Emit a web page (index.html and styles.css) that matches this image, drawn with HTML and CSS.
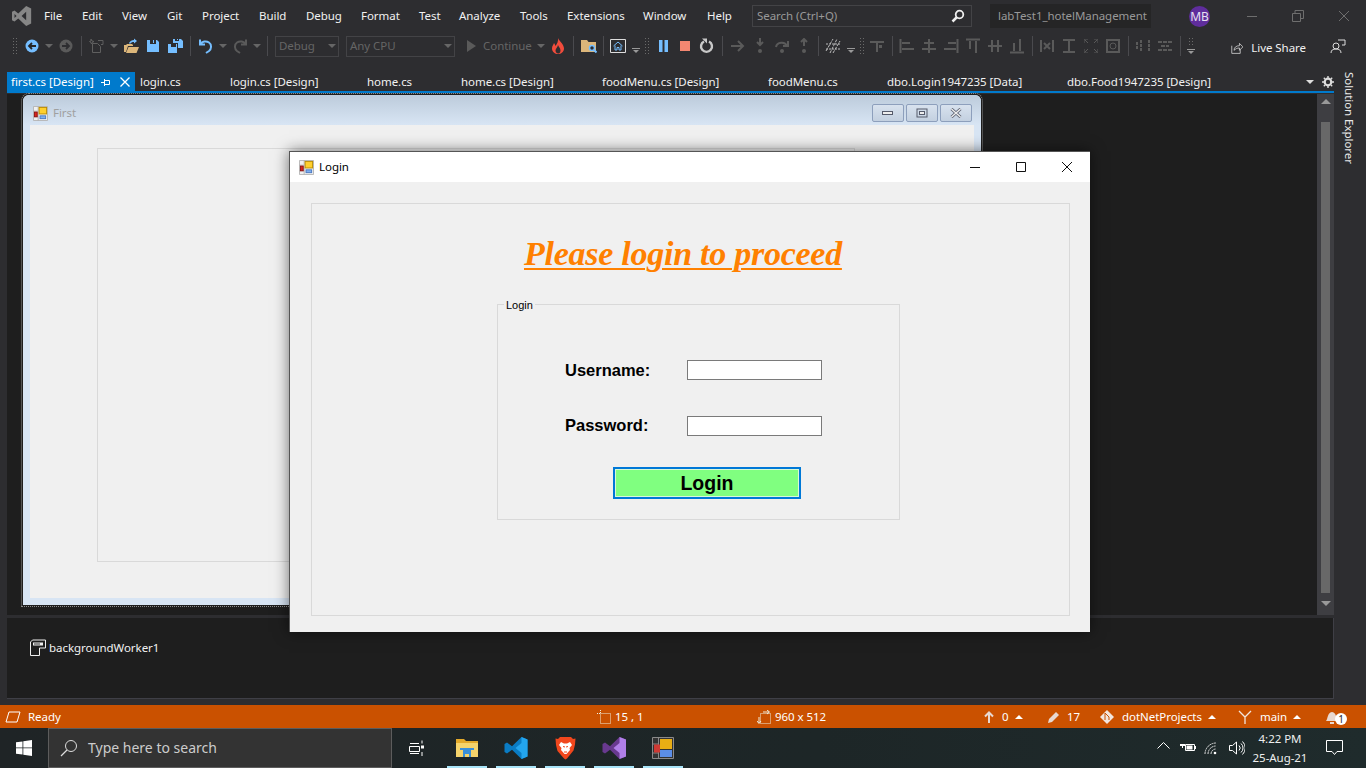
FILE: index.html
```html
<!DOCTYPE html>
<html lang="en">
<head>
  <meta charset="UTF-8" />
  <title>labTest1_hotelManagement - Microsoft Visual Studio</title>
  <link rel="stylesheet" href="styles.css">
</head>
<body>
  <svg class="defs" aria-hidden="true">
    <symbol id="form-icon" viewBox="0 0 16 16">
      <path d="M.5 .5h15v15H.5z" fill="#f0f0f0" stroke="#b4b4b4"/>
      <path d="M5.5 0v16M0 5.5h5M0 11.5h5.5" stroke="#b4b4b4"/>
      <rect x="6.5" y="1.5" width="8" height="7" fill="#ffd02e" stroke="#b98a00"/>
      <rect x="1.5" y="6.5" width="3" height="5" fill="#d8261c" stroke="#8e1010"/>
      <rect x="7.5" y="10.5" width="6" height="3" fill="#7fb0f0" stroke="#4a78c0"/>
    </symbol>
  </svg>

  <header class="titlebar">
    <svg class="vs-logo" width="22" height="20" viewBox="0 0 24 24"><path fill="#868686" fill-rule="evenodd" d="M17 0l6 3v18l-6 3-9.5-9L3 18.5 0 17V7l3-1.5L7.5 9zM17 7l-5.5 5 5.500 5zM3 9.500v5L5.500 12z"/></svg>
    <nav class="menu">
      <span>File</span><span>Edit</span><span>View</span><span>Git</span><span>Project</span><span>Build</span><span>Debug</span><span>Format</span><span>Test</span><span>Analyze</span><span>Tools</span><span>Extensions</span><span>Window</span><span>Help</span>
    </nav>
    <div class="quick-search">
      <span>Search (Ctrl+Q)</span>
      <svg width="14" height="14" viewBox="0 0 14 14"><circle cx="8.5" cy="5.5" r="3.8" fill="none" stroke="#eee" stroke-width="1.8"/><path d="M6 8l-4.500 4.500" stroke="#eee" stroke-width="2.5"/></svg>
    </div>
    <div class="solution-name">labTest1_hotelManagement</div>
    <div class="avatar">MB</div>
    <div class="win-controls">
      <svg width="12" height="12" viewBox="0 0 12 12"><path d="M1 6.5h10" stroke="#6e6e6e"/></svg>
      <svg width="12" height="12" viewBox="0 0 12 12"><path d="M.5 3.5h8v8h-8zM3 3.5v-3h8.500v8h-3" fill="none" stroke="#6e6e6e"/></svg>
      <svg width="12" height="12" viewBox="0 0 12 12"><path d="M1 1l10 10M11 1L1 11" stroke="#6e6e6e"/></svg>
    </div>
  </header>

  <div class="toolbar">
    <i class="grip grip-first"></i>
    <span class="ti"><svg width="16" height="16" viewBox="0 0 16 16"><circle cx="8" cy="8" r="6.5" fill="#75beff"/><path d="M12 8H5.5M8 5L5 8l3 3" fill="none" stroke="#252526" stroke-width="1.8"/></svg></span>
    <i class="car"></i>
    <span class="ti"><svg width="16" height="16" viewBox="0 0 16 16"><circle cx="8" cy="8" r="6.5" fill="#5a5a5a"/><path d="M4 8h6.5M8 5l3 3-3 3" fill="none" stroke="#2d2d30" stroke-width="1.8"/></svg></span>
    <i class="sep"></i>
    <span class="ti"><svg width="16" height="16" viewBox="0 0 16 16"><path d="M3.5 5.5h5l3 3v6h-8z" fill="none" stroke="#5f5f5f"/><path d="M2 1l1 2 2 .5-2 1L2.5 6 2 4.500 .5 3.500l1.500-.5zM9 2.500h5v4h-2" fill="none" stroke="#5f5f5f"/></svg></span>
    <i class="car"></i>
    <span class="ti"><svg width="16" height="16" viewBox="0 0 16 16"><path d="M1 7h2l1-1h5l1 1v1H5L3 14H1z" fill="#dcb67a"/><path d="M3 15l2.500-6H16l-2.500 6z" fill="#dcb67a"/><path d="M6 5c1-2 3-3 5-3V.5l3 2.500-3 2.500V4C9 4 8 4.500 7 6z" fill="#75beff"/></svg></span>
    <span class="ti"><svg width="14" height="14" viewBox="0 0 14 14"><path fill="#75beff" fill-rule="evenodd" d="M1 1h10l2 2v10H1zM4 1v4h6V1H8v3H7V1z"/></svg></span>
    <span class="ti"><svg width="16" height="16" viewBox="0 0 16 16"><path fill="#75beff" fill-rule="evenodd" d="M1 6h3v3h5V6h1v9H1zM6 1h8l2 2v7h-5V5H6zM8 1v2h4V1h-1v1h-1V1z"/></svg></span>
    <i class="sep"></i>
    <span class="ti"><svg width="16" height="16" viewBox="0 0 16 16"><path d="M2 1.5v5h5M2.500 6C4 3.500 8 2.500 11 4.500s2.500 6.500 0 8.500l-3 2" fill="none" stroke="#75beff" stroke-width="2"/></svg></span>
    <i class="car"></i>
    <span class="ti"><svg width="16" height="16" viewBox="0 0 16 16"><path d="M14 1.5v5H9M13.500 6C12 3.500 8 2.500 5 4.500s-2.500 6.500 0 8.500l3 2" fill="none" stroke="#5a5a5a" stroke-width="2"/></svg></span>
    <i class="car"></i>
    <i class="sep"></i>
    <div class="combo combo-debug"><span>Debug</span><i class="car"></i></div>
    <div class="combo combo-cpu"><span>Any CPU</span><i class="car"></i></div>
    <span class="ti ti-play"><svg width="12" height="14" viewBox="0 0 12 14"><path d="M2 1l9 6-9 6z" fill="#5a5a5a"/></svg></span>
    <span class="continue">Continue</span>
    <i class="car"></i>
    <span class="ti"><svg width="14" height="16" viewBox="0 0 14 16"><path d="M7 0c1 3 6 6 6 10.5C13 14 10 16 7 16s-6-2-6-5.500C1 8 2.500 6.500 3 5c.8 1 1.200 2 1.500 3C6 6 7.500 3 7 0z" fill="#f14c3c"/><path d="M7 7c.5 2 2.500 3 2.500 5.500S8 15.500 7 15.500s-2.500-1-2.500-3C4.500 10.500 6.500 9.500 7 7z" fill="#2d2d30"/></svg></span>
    <i class="sep"></i>
    <span class="ti"><svg width="16" height="16" viewBox="0 0 16 16"><path d="M0 2h6l1.5 2H15v10H0z" fill="#dcb67a"/><circle cx="11" cy="10" r="2.5" fill="#2d2d30" stroke="#75beff" stroke-width="1.5"/><path d="M13 12l2.500 2.500" stroke="#75beff" stroke-width="2"/></svg></span>
    <i class="sep sep-7"></i>
    <span class="ti"><svg width="16" height="14" viewBox="0 0 16 14"><path d="M.5 .5h15v13H.5z" fill="none" stroke="#ddd"/><path d="M3.5 7L8 3l4.500 4M5 6.500V11h2V8.500h2V11h2V6.500" fill="none" stroke="#75beff"/></svg></span>
    <i class="drop"></i>
    <i class="grip"></i>
    <span class="ti ti-pause"><svg width="9" height="12" viewBox="0 0 9 12"><path d="M0 0h3.500v12H0zM5.500 0H9v12H5.500z" fill="#75beff"/></svg></span>
    <span class="ti"><svg width="10" height="10" viewBox="0 0 10 10"><path d="M0 0h10v10H0z" fill="#f48771"/></svg></span>
    <span class="ti"><svg width="16" height="16" viewBox="0 0 16 16"><path d="M5 3.5a5.500 5.500 0 1 0 5 0" fill="none" stroke="#c8c8c8" stroke-width="2.400"/><path d="M3 .5h5v5z" fill="#c8c8c8"/></svg></span>
    <i class="sep"></i>
    <span class="ti"><svg width="16" height="14" viewBox="0 0 16 14"><path d="M1 7h12M8 2l5 5-5 5" fill="none" stroke="#5a5a5a" stroke-width="2"/></svg></span>
    <span class="ti"><svg width="14" height="16" viewBox="0 0 14 16"><path d="M7 0v6M4 4l3 3 3-3" fill="none" stroke="#5a5a5a" stroke-width="2"/><circle cx="7" cy="13" r="2" fill="#5a5a5a"/></svg></span>
    <span class="ti"><svg width="16" height="16" viewBox="0 0 16 16"><path d="M2 9c1-5 9-6 11-1M14 3v5H9" fill="none" stroke="#5a5a5a" stroke-width="2"/><circle cx="8" cy="13" r="2" fill="#5a5a5a"/></svg></span>
    <span class="ti"><svg width="14" height="16" viewBox="0 0 14 16"><path d="M7 8V2M4 4l3-3 3 3" fill="none" stroke="#5a5a5a" stroke-width="2"/><circle cx="7" cy="13" r="2" fill="#5a5a5a"/></svg></span>
    <i class="sep sep-7"></i>
    <span class="ti"><svg width="16" height="16" viewBox="0 0 16 16"><path d="M1 6h14M1 11h14" stroke="#bbb" stroke-dasharray="2 1"/><path d="M5 15L12 1M8 15l7-12M1 13L8 1" stroke="#bbb" stroke-dasharray="3 1" fill="none"/></svg></span>
    <i class="drop"></i>
    <i class="grip"></i>
    <span class="ti ti-align"><svg width="16" height="16" viewBox="0 0 16 16"><path d="M1 3h14v2H1zM7 5h2v9H7zM10 7h3v3h-3z" fill="#5a5a5a"/></svg></span>
    <i class="sep sep-8"></i>
    <span class="ti"><svg width="16" height="14" viewBox="0 0 16 14"><path d="M1.500 0v14M3 4h8M3 10h12" stroke="#5a5a5a" stroke-width="2" fill="none"/></svg></span>
    <span class="ti"><svg width="16" height="14" viewBox="0 0 16 14"><path d="M8 0v14M3 4h10M1 10h14" stroke="#5a5a5a" stroke-width="2" fill="none"/></svg></span>
    <span class="ti"><svg width="16" height="14" viewBox="0 0 16 14"><path d="M14.500 0v14M5 4h8M1 10h12" stroke="#5a5a5a" stroke-width="2" fill="none"/></svg></span>
    <span class="ti"><svg width="14" height="16" viewBox="0 0 14 16"><path d="M0 1.500h14M4 3v8M10 3v12" stroke="#5a5a5a" stroke-width="2" fill="none"/></svg></span>
    <span class="ti"><svg width="14" height="14" viewBox="0 0 14 14"><path d="M0 7h14M4 1v12M10 1v12" stroke="#5a5a5a" stroke-width="2" fill="none"/></svg></span>
    <span class="ti"><svg width="14" height="16" viewBox="0 0 14 16"><path d="M0 14.500h14M4 5v8M10 1v12" stroke="#5a5a5a" stroke-width="2" fill="none"/></svg></span>
    <i class="sep sep-8"></i>
    <span class="ti"><svg width="14" height="14" viewBox="0 0 14 14"><path d="M1 1v12M13 1v12M4 4l6 6M10 4l-6 6" stroke="#5a5a5a" stroke-width="2" fill="none"/></svg></span>
    <span class="ti"><svg width="14" height="14" viewBox="0 0 14 14"><path d="M1 1h12M1 13h12M7 2v10" stroke="#5a5a5a" stroke-width="2" fill="none"/></svg></span>
    <span class="ti"><svg width="14" height="14" viewBox="0 0 14 14"><path d="M0 4V0h4M10 0h4v4M14 10v4h-4M4 14H0v-4M1 1l3 3M13 1l-3 3M1 13l3-3M13 13l-3-3" stroke="#5a5a5a" fill="none"/></svg></span>
    <span class="ti"><svg width="14" height="14" viewBox="0 0 14 14"><path d="M1 1h12v12H1z" fill="none" stroke="#5a5a5a" stroke-width="2"/><circle cx="7" cy="7" r="3" fill="none" stroke="#5a5a5a"/></svg></span>
    <i class="sep sep-8"></i>
    <span class="ti"><svg width="14" height="14" viewBox="0 0 14 14"><path d="M1 3v8M5 1v12M13 1v12" stroke="#5a5a5a" stroke-width="2" stroke-dasharray="3 1" fill="none"/></svg></span>
    <span class="ti"><svg width="14" height="14" viewBox="0 0 14 14"><path d="M0 3h14M3 7h8M0 11h14" stroke="#5a5a5a" stroke-width="2" stroke-dasharray="4 1" fill="none"/></svg></span>
    <i class="sep sep-8"></i>
    <div class="grip-drop"><i class="grip grip-short"></i><i class="drop drop-solo"></i></div>
    <div class="live-share">
      <svg width="16" height="16" viewBox="0 0 16 16"><path d="M1 5v10h11v-5" fill="none" stroke="#ddd"/><path d="M4 11c0-4 3-6 7-6V2l4.500 4.500L11 11V8c-3 0-5 1-7 3z" fill="none" stroke="#ddd"/></svg>
      <span>Live Share</span>
    </div>
    <span class="ti ti-feedback"><svg width="16" height="16" viewBox="0 0 16 16"><circle cx="6" cy="8" r="3" fill="none" stroke="#ddd"/><path d="M1 15c0-3 2-4 5-4s5 1 5 4M8 2h7v5h-3" fill="none" stroke="#ddd"/></svg></span>
  </div>

  <div class="ide-body">
    <div class="doc">
      <div class="tabs">
        <div class="tab-active">
          <span>first.cs [Design]</span>
          <svg width="10" height="10" viewBox="0 0 10 10"><path d="M0 5.500h3M3.500 2v7M3.500 3.500h5v4h-5" fill="none" stroke="#fff"/></svg>
          <svg width="10" height="10" viewBox="0 0 10 10"><path d="M.5 .5l9 9M9.500 .5l-9 9" stroke="#fff" stroke-width="1.300"/></svg>
        </div>
        <span>login.cs</span><span>login.cs [Design]</span><span>home.cs</span><span>home.cs [Design]</span><span>foodMenu.cs [Design]</span><span>foodMenu.cs</span><span>dbo.Login1947235 [Data]</span><span>dbo.Food1947235 [Design]</span>
        <i class="tabs-caret"></i>
        <svg class="tabs-gear" width="12" height="12" viewBox="0 0 12 12"><circle cx="6" cy="6" r="3.300" fill="none" stroke="#ddd" stroke-width="2.200"/><path d="M6 0v12M0 6h12M1.800 1.800l8.400 8.400M10.200 1.800l-8.400 8.400" stroke="#ddd" stroke-width="1.400" stroke-dasharray="2 8"/></svg>
      </div>

      <div class="canvas-row">
        <div class="designer">
          <div class="first-form">
            <div class="first-title">
              <svg width="15" height="15"><use href="#form-icon"/></svg>
              <span class="first-name">First</span>
              <div class="aero-buttons">
                <span><svg width="12" height="8" viewBox="0 0 12 8"><rect x=".5" y="2.500" width="10" height="3" fill="#eee" stroke="#555a6a"/></svg></span>
                <span><svg width="12" height="10" viewBox="0 0 12 10"><rect x="1" y="1" width="10" height="8" fill="none" stroke="#555a6a"/><rect x="3.500" y="3.500" width="5" height="3" fill="#eee" stroke="#555a6a"/></svg></span>
                <span><svg width="12" height="10" viewBox="0 0 12 10"><path d="M1.500 1l9 8M10.500 1l-9 8" stroke="#555a6a" stroke-width="3"/><path d="M1.500 1l9 8M10.500 1l-9 8" stroke="#eee" stroke-width="1.500"/></svg></span>
              </div>
            </div>
            <div class="first-client">
              <div class="first-panel"></div>
            </div>
          </div>

          <div class="login-window">
            <div class="login-title">
              <svg width="15" height="15"><use href="#form-icon"/></svg>
              <span class="login-name">Login</span>
              <div class="login-controls">
                <svg width="12" height="12" viewBox="0 0 12 12"><path d="M1 6.500h10" stroke="#111"/></svg>
                <svg width="12" height="12" viewBox="0 0 12 12"><path d="M1.500 1.500h9v9h-9z" fill="none" stroke="#111"/></svg>
                <svg width="12" height="12" viewBox="0 0 12 12"><path d="M1 1l10 10M11 1L1 11" stroke="#111"/></svg>
              </div>
            </div>
            <div class="login-client">
              <div class="login-panel">
                <h1 class="login-heading">Please login to proceed</h1>
                <form class="login-group">
                  <span class="group-caption">Login</span>
                  <div class="field">
                    <label for="username">Username:</label>
                    <input type="text" id="username" />
                  </div>
                  <div class="field field-password">
                    <label for="password">Password:</label>
                    <input type="password" id="password" />
                  </div>
                  <button type="button" class="login-button">Login</button>
                </form>
              </div>
            </div>
          </div>
        </div>

        <div class="scrollbar">
          <i class="arrow-up"></i>
          <div class="thumb"></div>
          <i class="arrow-down"></i>
        </div>
      </div>

      <div class="splitter"></div>
      <div class="tray">
        <svg width="18" height="18" viewBox="0 0 18 18"><path d="M1.500 16.500V3l2-2h13v8h-6v7.500z" fill="none" stroke="#eee"/><path d="M4 3.500h10v3H4z" fill="#eee"/><path d="M5 4.500h6v1H5z" fill="#333"/></svg>
        <span>backgroundWorker1</span>
      </div>
    </div>
    <aside class="side">
      <span class="side-tab">Solution Explorer</span>
    </aside>
  </div>

  <footer class="statusbar">
    <div class="st">
      <svg width="16" height="12" viewBox="0 0 16 12"><path d="M4 1h11l-3 10H1z" fill="none" stroke="#fff"/></svg>
      <span class="ready">Ready</span>
    </div>
    <div class="st">
      <svg width="14" height="14" viewBox="0 0 14 14"><path d="M3.500 0v3M0 3.500h3M3.500 3.500h10v10h-10z" fill="none" stroke="#eed" stroke-dasharray="1 1"/></svg>
      <span>15 , 1</span>
    </div>
    <div class="st">
      <svg width="14" height="14" viewBox="0 0 14 14"><path d="M3.500 3.500h10v10h-10z" fill="none" stroke="#eed" stroke-dasharray="1 1"/><path d="M6 2h6M10 0l2.500 2L10 4M2 7v6M0 11l2 2.500L4 11" fill="none" stroke="#eed"/></svg>
      <span>960 x 512</span>
    </div>
    <div class="st">
      <svg width="10" height="12" viewBox="0 0 10 12"><path d="M5 12V2M1 5.500l4-4 4 4" fill="none" stroke="#e8d8d0" stroke-width="2"/></svg>
      <span class="st-gap">0</span><i class="up"></i>
    </div>
    <div class="st">
      <svg width="14" height="14" viewBox="0 0 14 14"><path d="M1 13l1-4 7-7 3 3-7 7z" fill="#e8d8d0"/></svg>
      <span class="st-gap-small">17</span>
    </div>
    <div class="st">
      <svg width="14" height="14" viewBox="0 0 14 14"><path d="M7 0l7 7-7 7-7-7z" fill="#f2e6de"/><path d="M5 3l4 4v3M5 3v7" stroke="#ca5100" fill="none"/></svg>
      <span class="st-gap">dotNetProjects</span><i class="up"></i>
    </div>
    <div class="st">
      <svg width="14" height="14" viewBox="0 0 14 14"><path d="M1 1l6 6 6-6M7 7v7" fill="none" stroke="#f2e6de" stroke-width="1.300"/></svg>
      <span class="st-gap">main</span><i class="up"></i>
    </div>
    <div class="st st-bell">
      <svg width="14" height="14" viewBox="0 0 14 14"><path d="M1 11c2-2 1-8 6-9 5 1 4 7 6 9z" fill="#e8d8d0"/><path d="M5 12h4v2H5z" fill="#e8d8d0"/></svg>
      <span class="badge">1</span>
    </div>
  </footer>

  <div class="taskbar">
    <div class="start">
      <svg width="16" height="16" viewBox="0 0 16 16"><path d="M0 2.300l6.500-.9v6.100H0zM7.300 1.300L16 0v7.500H7.300zM0 8.300h6.500v6.300L0 13.700zM7.300 8.300H16V16l-8.700-1.300z" fill="#fff"/></svg>
    </div>
    <div class="task-search">
      <svg width="18" height="18" viewBox="0 0 18 18"><circle cx="11" cy="7" r="5.500" fill="none" stroke="#ddd"/><path d="M7 11l-6 6" stroke="#ddd" stroke-width="1.300"/></svg>
      <span>Type here to search</span>
    </div>
    <div class="task-view">
      <svg width="16" height="16" viewBox="0 0 16 16"><path d="M2 3.500h9M2 13.500h9M1.500 6.500h10v5h-10zM14 .5v3M14 12v4" fill="none" stroke="#fff"/><path d="M13 5.500h3v3h-3z" fill="#fff"/></svg>
    </div>
    <div class="app">
      <svg width="24" height="20" viewBox="0 0 24 20"><path d="M1 1h8l2 2h12v3H1z" fill="#e3a92a"/><path d="M1 5h22v14H1z" fill="#f5d36b"/><path d="M8 12h8v7h-2v-3h-4v3H8z" fill="#3a8fd8"/><path d="M5 12h14v-2H5z" fill="#3a8fd8"/></svg>
    </div>
    <div class="app">
      <svg width="24" height="24" viewBox="0 0 24 24"><path d="M17.500 1l6 2.500v17l-6 2.500L8 13.800 3 17.500.5 16V8L3 6.500l5 3.700z" fill="#0a7cc4"/><path d="M17.500 1l6 2.500v17l-6 2.500v-6l-6-5 6-5z" fill="#23a5ee"/></svg>
    </div>
    <div class="app">
      <svg width="21" height="24" viewBox="0 0 21 24"><path d="M5 1h11l2 2 2.500-.5-.5 6-1.500 6L12 22.500l-1.500 1-1.500-1L2.500 15 1 9 .5 2.500 3 3z" fill="#f1471d"/><path d="M6 6l3 1.500h3L15 6l2 3-2.500 3 .5 2-3.500 4h-2L6 14l.5-2L4 9z" fill="#fff"/><path d="M8 10.500l2 .5M13 10.500l-2 .5M9 16h3" stroke="#f1471d"/></svg>
    </div>
    <div class="app">
      <svg width="24" height="24" viewBox="0 0 24 24"><path d="M17.500 1L24 3.500v17L17.500 23 8 13.800 3 17.500.5 16V8L3 6.500l5 3.700z" fill="#68398f"/><path d="M17.500 1L24 3.500v17L17.500 23v-6l-6-5 6-5z" fill="#b07fe8"/></svg>
    </div>
    <div class="app">
      <svg width="22" height="22" viewBox="0 0 22 22"><path d="M.5 .5h21v21H.5z" fill="#333" stroke="#8a8a8a"/><path d="M6.500 1v20M1 7h6M1 16h6" stroke="#8a8a8a"/><rect x="8" y="2" width="12" height="10" fill="#e8ae14"/><rect x="2" y="7.500" width="6" height="8" fill="#cf3a34"/><rect x="8" y="13" width="12" height="7" fill="#5b8ee8"/></svg>
    </div>
    <div class="tray-icons">
      <span><svg width="13" height="8" viewBox="0 0 13 8"><path d="M.5 7.500l6-6 6 6" fill="none" stroke="#fff"/></svg></span>
      <span><svg width="16" height="12" viewBox="0 0 16 12"><path d="M5.500 3.500h9v6h-9z" fill="none" stroke="#fff"/><path d="M6.500 4.500h6v4h-6zM15 5h1v3h-1zM1 0v3M4 0v3M0 3h5v2H3v2H2V5H0z" fill="#fff"/></svg></span>
      <span><svg width="16" height="14" viewBox="0 0 16 14"><path d="M1 13A11 11 0 0 1 12 2M4 13a8 8 0 0 1 8-8M7 13a5 5 0 0 1 5-5" fill="none" stroke="#ddd" stroke-dasharray="2 .5"/><circle cx="11" cy="12" r="1.300" fill="#fff"/></svg></span>
      <span><svg width="16" height="14" viewBox="0 0 16 14"><path d="M.5 4.500h3l4-3.500v12l-4-3.500h-3z" fill="none" stroke="#fff"/><path d="M10 4.500a3.500 3.500 0 0 1 0 5M12 2.500a6 6 0 0 1 0 9M13.500 .5a9 9 0 0 1 0 13" fill="none" stroke="#fff"/></svg></span>
    </div>
    <div class="clock">
      <span>4:22 PM</span>
      <span>25-Aug-21</span>
    </div>
    <div class="notify">
      <svg width="17" height="16" viewBox="0 0 17 16"><path d="M.5 .5h16v11h-5.500l-2.500 3-2.500-3H.5z" fill="none" stroke="#fff"/></svg>
    </div>
  </div>
</body>
</html>
```

FILE: styles.css
```css
:root {
  --ide-bg: #2d2d30;
  --editor-bg: #1e1e1e;
  --accent: #007acc;
  --status: #ca5100;
  --dim: #656565;
  --ui-font: "Noto Sans", "Open Sans", sans-serif;
}
* {
  box-sizing: border-box;
}
html, body {
  margin: 0;
  height: 768px;
  overflow: hidden;
}
body {
  background: var(--ide-bg);
  color: #f1f1f1;
  font: 11.5px/16px var(--ui-font);
  letter-spacing: -0.05px;
}
i {
  font-style: normal;
}
.defs {
  display: block;
  width: 0;
  height: 0;
}

/* title bar */
.titlebar {
  display: flex;
  align-items: center;
  height: 32px;
}
.vs-logo {
  margin-left: 11px;
}
.menu {
  display: grid;
  grid-template-columns: 38px 40px 45px 35px 57px 47px 55px 58px 40px 61px 47px 76px 64px 45px;
  margin-left: 11px;
}
.quick-search {
  display: flex;
  align-items: center;
  justify-content: space-between;
  width: 220px;
  height: 22px;
  margin-top: -1px;
  padding: 0 6px 0 4px;
  border: 1px solid #434346;
  color: #999;
}
.solution-name {
  width: 161px;
  margin-left: 18px;
  padding: 4px 8px;
  background: #252526;
  color: #999;
  white-space: nowrap;
}
.avatar {
  width: 21px;
  height: 21px;
  margin-left: 38px;
  border-radius: 50%;
  background: #5f2d9c;
  color: #e8e0f0;
  font-size: 12px;
  line-height: 21px;
  text-align: center;
}
.win-controls {
  display: flex;
  gap: 34px;
  margin-left: 36px;
}

/* toolbar */
.toolbar {
  display: flex;
  align-items: center;
  height: 28px;
  padding-left: 12px;
}
.grip {
  flex: none;
  width: 6px;
  height: 18px;
  background: radial-gradient(#6a6a6a 1px, transparent 1px) 0 0 / 3px 3px;
}
.grip-first {
  margin-right: 3px;
}
.grip-drop {
  display: flex;
  flex: none;
  flex-direction: column;
  align-items: center;
  gap: 4px;
  margin-left: 2px;
  width: 10px;
}
.grip-short {
  height: 8px;
}
.ti {
  display: flex;
  flex: none;
  align-items: center;
  justify-content: center;
  width: 22px;
}
.ti-play {
  margin-left: 5px;
}
.ti-pause {
  margin-left: 2px;
}
.ti-align {
  margin-left: 1px;
}
.car {
  display: flex;
  flex: none;
  justify-content: center;
  width: 12px;
}
.car::after {
  content: "";
  border-top: 4px solid #666;
  border-left: 4px solid transparent;
  border-right: 4px solid transparent;
}
.sep {
  flex: none;
  width: 9px;
  height: 20px;
  background: linear-gradient(#4a4a4e, #4a4a4e) center / 1px 100% no-repeat;
}
.sep-7 {
  width: 7px;
}
.sep-8 {
  width: 8px;
}
.drop {
  position: relative;
  flex: none;
  width: 8px;
  height: 6px;
  margin: 10px 4px 0 3px;
  border-top: 1px solid #999;
}
.drop::after {
  content: "";
  position: absolute;
  top: 1px;
  left: 1px;
  border-top: 3px solid #999;
  border-left: 3px solid transparent;
  border-right: 3px solid transparent;
}
.drop-solo {
  margin: 0;
}
.combo {
  display: flex;
  flex: none;
  align-items: center;
  justify-content: space-between;
  height: 21px;
  padding-left: 3px;
  border: 1px solid #434346;
  color: var(--dim);
}
.combo-debug {
  width: 64px;
  margin-left: 3px;
  margin-right: 7px;
}
.combo-cpu {
  width: 109px;
}
.continue {
  flex: none;
  width: 52px;
  margin-left: 1px;
  color: var(--dim);
}
.live-share {
  display: flex;
  flex: none;
  align-items: center;
  gap: 8px;
  width: 75px;
  margin-left: 35px;
  margin-top: 3px;
  white-space: nowrap;
}
.ti-feedback {
  margin-left: 21px;
}

/* documents and designer */
.ide-body {
  display: flex;
  height: 633px;
  margin-top: 12px;
}
.doc {
  display: flex;
  flex: none;
  flex-direction: column;
  width: 1327px;
  margin-left: 7px;
}
.tabs {
  display: grid;
  grid-template-columns: 133px 90px 137px 94px 141px 166px 119px 180px 234px 18px 15px;
  align-items: center;
  height: 21px;
  border-bottom: 2px solid var(--accent);
}
.tab-active {
  display: flex;
  align-items: center;
  height: 19px;
  margin-right: 5px;
  padding-left: 4px;
  background: var(--accent);
  color: #fff;
}
.tab-active span {
  width: 90px;
  white-space: nowrap;
}
.tab-active svg + svg {
  margin-left: 9px;
}
.tabs-caret {
  justify-self: center;
  border-top: 4px solid #ddd;
  border-left: 4px solid transparent;
  border-right: 4px solid transparent;
}
.tabs-gear {
  justify-self: end;
}
.canvas-row {
  display: flex;
  height: 521px;
  margin-top: 1px;
  background: var(--editor-bg);
}
.designer {
  position: relative;
  z-index: 1;
  flex: 1;
}
.scrollbar {
  display: flex;
  flex-direction: column;
  align-items: center;
  width: 17px;
  padding: 5px 0;
  background: #3e3e42;
}
.arrow-up {
  border-bottom: 5px solid #999;
  border-left: 5px solid transparent;
  border-right: 5px solid transparent;
}
.arrow-down {
  border-top: 5px solid #999;
  border-left: 5px solid transparent;
  border-right: 5px solid transparent;
}
.thumb {
  width: 9px;
  height: 471px;
  margin: 18px 0 8px;
  background: #686868;
}
.splitter {
  height: 3px;
  background: var(--ide-bg);
}
.tray {
  display: flex;
  align-items: center;
  gap: 2px;
  height: 81px;
  padding: 0 0 20px 22px;
  background: var(--editor-bg);
  border-right: 1px solid #3f3f46;
  border-bottom: 1px solid #3f3f46;
  color: #f1f1f1;
}
.side {
  flex: 1;
}
.side-tab {
  display: block;
  margin-left: 7px;
  writing-mode: vertical-rl;
  color: #e8e8e8;
  white-space: nowrap;
}

/* the two forms on the canvas */
.first-form {
  position: absolute;
  left: 16px;
  top: 1px;
  display: flex;
  flex-direction: column;
  width: 958px;
  height: 510px;
  background: #d8e5f4;
  border-radius: 6px 6px 0 0;
  outline: 1px dotted #8a8a8a;
  outline-offset: 1px;
}
.first-title {
  display: flex;
  flex: none;
  align-items: center;
  height: 30px;
  padding: 6px 9px 0 10px;
  border-radius: 6px 6px 0 0;
  background: linear-gradient(#bccbdb, #d8e5f4);
}
.first-name {
  margin-left: 5px;
  color: #a0a0a0;
}
.aero-buttons {
  display: flex;
  gap: 2px;
  margin-left: auto;
}
.aero-buttons span {
  display: flex;
  align-items: center;
  justify-content: center;
  width: 32px;
  height: 18px;
  border: 1px solid #8d9fbc;
  border-radius: 2px;
  background: linear-gradient(#d8e2ee, #c3d0e0);
}
.first-client {
  flex: 1;
  margin: 0 7px 7px;
  padding: 23px 0 36px 67px;
  background: #f0f0f0;
}
.first-panel {
  width: 758px;
  height: 100%;
  border: 1px solid #d9d9d9;
}
.login-window {
  position: absolute;
  left: 282px;
  top: 57px;
  width: 801px;
  height: 481px;
  border: 1px solid #555;
  border-width: 1px 0 0 1px;
  background: #f0f0f0;
  box-shadow: 0 0 14px rgba(0, 0, 0, 0.55);
}
.login-title {
  display: flex;
  align-items: center;
  height: 30px;
  padding: 0 17px 0 9px;
  background: #fff;
  color: #000;
}
.login-name {
  margin-left: 5px;
}
.login-controls {
  display: flex;
  gap: 34px;
  margin-left: auto;
}
.login-client {
  padding: 21px 21px 16px;
}
.login-panel {
  width: 759px;
  height: 413px;
  border: 1px solid #d9d9d9;
}
.login-heading {
  height: 100px;
  margin: 0;
  padding: 29px 0 0 212px;
  color: #ff8000;
  font: italic bold 34px/42px "Liberation Serif", serif;
  letter-spacing: -0.26px;
  text-decoration: underline 2px;
  text-underline-offset: 3px;
}
.login-group {
  position: relative;
  width: 403px;
  height: 216px;
  margin-left: 185px;
  padding: 55px 0 0 67px;
  border: 1px solid #d9d9d9;
  color: #000;
  font-family: "Liberation Sans", sans-serif;
  letter-spacing: 0;
}
.group-caption {
  position: absolute;
  left: 6px;
  top: -7px;
  padding: 0 2px;
  background: #f0f0f0;
  font-size: 11px;
  line-height: 14px;
}
.field {
  display: flex;
  align-items: center;
  height: 20px;
  margin-bottom: 36px;
}
.field label {
  width: 122px;
  font-size: 16.5px;
  font-weight: bold;
  line-height: 20px;
}
.field-password {
  margin-bottom: 31px;
}
.field-password label {
  margin-bottom: 3px;
}
.field input {
  width: 135px;
  height: 20px;
  padding: 0 2px;
  border: 1px solid #7a7a7a;
  border-radius: 0;
  background: #fff;
  outline: none;
}
.login-button {
  display: block;
  width: 188px;
  height: 32px;
  margin-left: 48px;
  padding: 0;
  border: 2px solid #0078d7;
  border-radius: 0;
  background: #80ff80;
  box-shadow: inset 0 0 0 1px #d8f8d8;
  color: #000;
  font: bold 19.5px/26px "Liberation Sans", sans-serif;
}

/* status bar */
.statusbar {
  display: grid;
  grid-template-columns: 592px 160px 227px 63px 53px 138px 87px 1fr;
  height: 23px;
  padding-left: 5px;
  background: var(--status);
  color: #fff;
}
.st {
  display: flex;
  align-items: center;
  gap: 4px;
  white-space: nowrap;
}
.ready {
  margin-left: 3px;
}
.st-gap {
  margin-left: 4px;
}
.st-gap-small {
  margin-left: 2px;
}
.up {
  margin-left: 2px;
  border-bottom: 4px solid #fff;
  border-left: 4px solid transparent;
  border-right: 4px solid transparent;
}
.st-bell {
  position: relative;
}
.badge {
  position: absolute;
  left: 10px;
  top: 8px;
  width: 12px;
  height: 12px;
  border-radius: 50%;
  background: #fff;
  color: #1e1e1e;
  font-size: 10px;
  line-height: 12px;
  text-align: center;
}

/* taskbar */
.taskbar {
  display: flex;
  align-items: center;
  height: 40px;
  background: linear-gradient(90deg, #1f2426, #1d2627 60%, #1f2b2c);
}
.start {
  display: flex;
  justify-content: center;
  width: 48px;
}
.task-search {
  display: flex;
  align-items: center;
  gap: 10px;
  width: 344px;
  height: 40px;
  padding-left: 11px;
  background: #333;
  border: 1px solid #5c5c5c;
  color: #ccc;
  font-size: 14px;
  letter-spacing: 0;
}
.task-view {
  display: flex;
  justify-content: center;
  width: 48px;
  margin-right: 7px;
}
.app {
  display: flex;
  flex: none;
  align-items: center;
  justify-content: center;
  width: 40px;
  height: 40px;
  margin-right: 9px;
  padding-top: 1px;
  border-bottom: 2px solid #a8e4f8;
}
.tray-icons {
  display: flex;
  margin-left: auto;
}
.tray-icons span {
  display: flex;
  justify-content: center;
  width: 24.5px;
}
.clock {
  display: flex;
  flex-direction: column;
  align-items: center;
  width: 62px;
  color: #eee;
  line-height: 19px;
}
.notify {
  display: flex;
  justify-content: center;
  width: 46px;
  margin-right: 9px;
}
```
